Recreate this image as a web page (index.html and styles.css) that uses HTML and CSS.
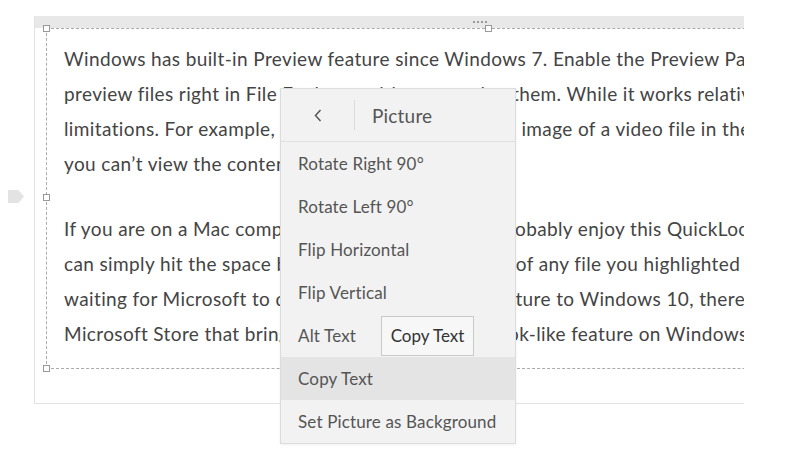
FILE: index.html
```html
<!DOCTYPE html>
<html lang="en">
<head>
    <meta charset="UTF-8">
    <title>Editor - Picture menu</title>
    <link rel="stylesheet" href="styles.css">
</head>
<body>

    <div class="page">
        <!-- Block marker -->
        <div class="tag"></div>

        <!-- Content card -->
        <div class="card">
            <div class="card-bar"></div>
            <div class="frame">
                <p>Windows has built-in Preview feature since Windows 7. Enable the Preview Pane to<br>preview files right in File Explorer, without opening them. While it works relatively well, it has some<br>limitations. For example, you can only see thumbnail image of a video file in the Preview Pane, and<br>you can’t view the contents of an archive.</p>
                <p>If you are on a Mac computer, then, you will most probably enjoy this QuickLook feature in macOS. You<br>can simply hit the space bar to get a simple preview of any file you highlighted in Finder. If you are<br>waiting for Microsoft to deliver a similarly useful feature to Windows 10, there is a free app in the<br>Microsoft Store that brings the full macOS QuickLook-like feature on Windows 10.</p>

                <span class="grip"></span>
                <span class="handle handle-tl"></span>
                <span class="handle handle-tc"></span>
                <span class="handle handle-ml"></span>
                <span class="handle handle-bl"></span>
            </div>
        </div>

        <!-- Picture menu -->
        <div class="menu">
            <div class="menu-head">
                <span class="back">
                    <svg width="8" height="13" viewBox="0 0 8 13"><polyline points="6.5,1 1.5,6.5 6.5,12" fill="none" stroke="#555" stroke-width="1.5"/></svg>
                </span>
                <span class="menu-title">Picture</span>
            </div>
            <div class="menu-item">Rotate Right 90°</div>
            <div class="menu-item">Rotate Left 90°</div>
            <div class="menu-item">Flip Horizontal</div>
            <div class="menu-item">Flip Vertical</div>
            <div class="menu-item alt-row">Alt Text <span class="alt-btn">Copy Text</span></div>
            <div class="menu-item active">Copy Text</div>
            <div class="menu-item">Set Picture as Background</div>
        </div>
    </div>

</body>
</html>
```

FILE: styles.css
```css
/* Base */
* {
    margin: 0;
    padding: 0;
    box-sizing: border-box;
}

body {
    font-family: Lato, "Open Sans", sans-serif;
    background-color: #fff;
    color: #444;
}

.page {
    position: relative;
    width: 800px;
    height: 454px;
    padding: 16px 0 0 34px;
    overflow: hidden;
}

/* Card */
.card {
    width: 710px;
    height: 388px;
    border-left: 1px solid #e2e2e2;
    border-bottom: 1px solid #e2e2e2;
    overflow: hidden;
}

.card-bar {
    height: 12px;
    background-color: #e8e8e8;
}

.frame {
    position: relative;
    margin-left: 11px;
    width: 900px;
    padding: 12px 0 17px 17px;
    border-top: 1px dashed #aaa;
    border-left: 1px dashed #aaa;
    border-bottom: 1px dashed #aaa;
}

.frame p {
    font-size: 19px;
    letter-spacing: 0.38px;
    line-height: 35px;
    white-space: nowrap;
    margin-bottom: 30px;
}

.frame p:last-of-type {
    margin-bottom: 0;
}

/* Resize handles */
.handle {
    position: absolute;
    width: 7px;
    height: 7px;
    background-color: #fff;
    border: 1px solid #999;
}

.handle-tl { left: -4px; top: -4px; }
.handle-tc { left: 438px; top: -4px; }
.handle-ml { left: -4px; top: 165px; }
.handle-bl { left: -4px; bottom: -4px; }

.grip {
    position: absolute;
    left: 426px;
    top: -8px;
    width: 14px;
    height: 2px;
    background: repeating-linear-gradient(90deg, #999 0 2px, transparent 2px 4px);
}

.tag {
    position: absolute;
    left: 8px;
    top: 190px;
    width: 16px;
    height: 13px;
    background-color: #e3e3e3;
    clip-path: polygon(0 0, 65% 0, 100% 50%, 65% 100%, 0 100%);
}

/* Menu */
.menu {
    position: absolute;
    left: 280px;
    top: 88px;
    width: 236px;
    background-color: #f2f2f2;
    border: 1px solid #dcdcdc;
    box-shadow: 0 1px 3px rgba(0, 0, 0, 0.06);
    color: #555;
}

.menu-head {
    display: flex;
    align-items: center;
    height: 53px;
    border-bottom: 1px solid #e0e0e0;
}

.back {
    display: flex;
    justify-content: center;
    align-items: center;
    width: 74px;
    height: 30px;
    border-right: 1px solid #dcdcdc;
}

.menu-title {
    padding-left: 17px;
    font-size: 19px;
    letter-spacing: 0.2px;
}

.menu-item {
    display: flex;
    align-items: center;
    height: 43px;
    padding-left: 17px;
    font-size: 17px;
    letter-spacing: 0.15px;
}

.menu-item.active {
    background-color: #e4e4e4;
}

.alt-btn {
    display: flex;
    align-items: center;
    justify-content: center;
    width: 93px;
    height: 40px;
    margin-left: 25px;
    background-color: #f7f7f7;
    border: 1px solid #c9c9c9;
    color: #333;
    letter-spacing: 0;
}
```
